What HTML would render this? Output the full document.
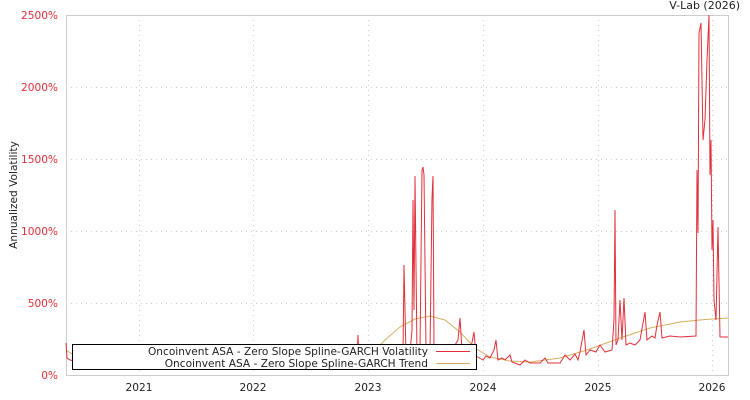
<!DOCTYPE html>
<html><head><meta charset="utf-8"><style>
html,body{margin:0;padding:0;background:#fff;width:750px;height:400px;overflow:hidden}
svg{display:block;font-family:"DejaVu Sans","Liberation Sans",sans-serif}
</style></head><body>
<svg width="750" height="400" viewBox="0 0 750 400" xmlns="http://www.w3.org/2000/svg">
<rect x="0" y="0" width="750" height="400" fill="#fff"/>
<g stroke="#ccc" stroke-width="1" stroke-dasharray="1,4">
<line x1="139.5" y1="15" x2="139.5" y2="375"/><line x1="253.5" y1="15" x2="253.5" y2="375"/>
<line x1="368.5" y1="15" x2="368.5" y2="375"/><line x1="483.5" y1="15" x2="483.5" y2="375"/>
<line x1="598.5" y1="15" x2="598.5" y2="375"/><line x1="712.5" y1="15" x2="712.5" y2="375"/>
<line x1="66" y1="87.5" x2="728" y2="87.5"/><line x1="66" y1="159.5" x2="728" y2="159.5"/>
<line x1="66" y1="231.5" x2="728" y2="231.5"/><line x1="66" y1="303.5" x2="728" y2="303.5"/>
</g>
<rect x="66.5" y="15.5" width="662" height="360" fill="none" stroke="#ccc"/>
<polyline fill="none" stroke="#d4b060" stroke-width="1" points="66,350 75,356 100,360 200,361 300,361 368,358 385,340 400,327 415,319 430,316 445,320 460,332 475,348 490,357 510,361 530,362 560,358 590,349 620,338 650,328 680,322 700,320 712,319 728,318"/>
<polyline fill="none" stroke="#e0303a" stroke-width="1" points="66,343 67,358 70,360 80,362 200,363 300,362 350,362 357,361 358,335 359,360 370,360 390,358 403,355 404,265 406,355 410,352 412,330 413,200 414,310 415,176 417,355 420,350 422,170 423,167 424,175 426,350 430,352 432,198 433,176 434,350 440,352 445,345 452,350 458,340 460,318 462,350 470,353 474,332 476,356 483,360 486,356 490,358 494,350 496,340 498,360 502,358 505,360 510,355 512,362 520,365 525,360 530,363 540,363 545,358 548,363 560,363 565,355 570,360 575,354 578,360 580,352 584,330 586,355 590,350 596,352 600,345 605,352 612,350 614,320 615,210 616,345 618,340 620,300 622,340 624,298 626,345 630,343 635,345 640,340 645,312 647,340 652,336 655,338 657,325 660,312 662,338 670,336 680,337 696,336 697,170 698,233 699,33 701,23 703,140 705,120 707,60 709,15 710,175 711,140 712,250 713,220 714,300 716,320 718,227 720,337 728,337"/>
<g fill="#e0303a" font-size="10.6" text-anchor="end">
<text x="58" y="19">2500%</text><text x="58" y="91">2000%</text><text x="58" y="163">1500%</text>
<text x="58" y="235">1000%</text><text x="58" y="307">500%</text><text x="58" y="379">0%</text>
</g>
<g fill="#222" font-size="10.6" text-anchor="middle">
<text x="139" y="391">2021</text><text x="253" y="391">2022</text><text x="368" y="391">2023</text>
<text x="483" y="391">2024</text><text x="598" y="391">2025</text><text x="712" y="391">2026</text>
</g>
<text x="17" y="195" font-size="10.6" fill="#222" text-anchor="middle" transform="rotate(-90 17 195)">Annualized Volatility</text>
<text x="740" y="9" font-size="11" fill="#222" text-anchor="end">V-Lab (2026)</text>
<rect x="72.5" y="344.5" width="404" height="25" fill="#fff" stroke="#000"/>
<g font-size="10.6" fill="#222" text-anchor="end">
<text x="428" y="355">Oncoinvent ASA - Zero Slope Spline-GARCH Volatility</text>
<text x="428" y="367">Oncoinvent ASA - Zero Slope Spline-GARCH Trend</text>
</g>
<line x1="436" y1="351.5" x2="470" y2="351.5" stroke="#e0303a"/>
<line x1="436" y1="363.5" x2="470" y2="363.5" stroke="#d4b060"/>
</svg>
</body></html>
